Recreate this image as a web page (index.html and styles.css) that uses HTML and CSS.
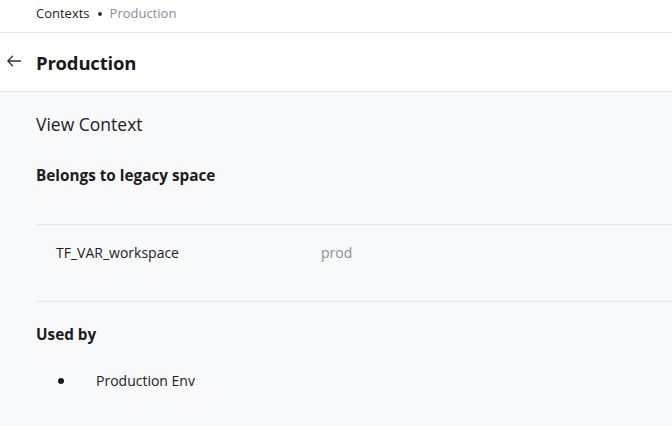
FILE: index.html
```html
<!DOCTYPE html>
<html>
<head>
<meta charset="utf-8">
<link rel="stylesheet" href="styles.css">
</head>
<body>
<div class="topbar">
  <span class="crumb">Contexts</span>
  <span class="dot"></span>
  <span class="crumb current">Production</span>
</div>
<div class="header">
  <svg class="back" width="16" height="12" viewBox="0 0 16 12"><path d="M14.5 6H1.8M6.5 1.3L1.8 6l4.7 4.7" fill="none" stroke="#333" stroke-width="1.3" stroke-linecap="round" stroke-linejoin="round"/></svg>
  <h1 class="title">Production</h1>
</div>
<div class="main">
  <h2 class="view">View Context</h2>
  <h3 class="section">Belongs to legacy space</h3>
  <div class="vars">
    <div class="row">
      <span class="key">TF_VAR_workspace</span>
      <span class="val">prod</span>
    </div>
  </div>
  <h3 class="section used">Used by</h3>
  <ul class="list">
    <li>Production Env</li>
  </ul>
</div>
</body>
</html>
```
FILE: styles.css
```css
html, body { margin: 0; padding: 0; }
body {
  font-family: "Open Sans", "Noto Sans", sans-serif;
  color: #1c1c1e;
  background: #f8f9fb;
  width: 672px;
  height: 426px;
  overflow: hidden;
}
.topbar {
  height: 33px;
  box-sizing: border-box;
  background: #fff;
  border-bottom: 1px solid #e4e6ea;
  display: flex;
  align-items: flex-start;
  padding: 4px 0 0 36px;
  font-size: 13px;
  line-height: 18px;
}
.crumb { color: #222; }
.crumb.current { color: #8a8d93; }
.dot {
  width: 4px;
  height: 4px;
  border-radius: 50%;
  background: #333;
  margin: 8px 8px 0 8px;
}
.header {
  height: 59px;
  box-sizing: border-box;
  background: #fff;
  border-bottom: 1px solid #e4e6ea;
  display: flex;
  align-items: center;
  position: relative;
}
.back { position: absolute; left: 6px; top: 22px; }
.title {
  margin: 0 0 0 36px;
  font-size: 18.5px;
  font-weight: 700;
  color: #1a1a1a;
  letter-spacing: -0.2px;
}
.main { padding: 0 0 0 36px; }
.view {
  margin: 0;
  padding-top: 21px;
  font-size: 17.5px;
  font-weight: 400;
  line-height: 22px;
  color: #1c1c1e;
}
.section {
  margin: 30px 0 0 0;
  font-size: 15.3px;
  font-weight: 700;
  line-height: 20px;
}
.vars {
  margin-top: 39px;
  border-top: 1px solid #e4e6ea;
  border-bottom: 1px solid #e4e6ea;
  height: 76px;
  box-sizing: content-box;
}
.row { display: flex; padding: 19px 0 0 20px; font-size: 14px; line-height: 18px; }
.key { width: 265px; color: #222; }
.val { color: #8a8d93; }
.section.used { margin-top: 22px; }
.list {
  list-style: none;
  margin: 28px 0 0 0;
  padding-left: 20px;
  font-size: 14px;
  line-height: 18px;
  color: #222;
}
.list li { display: flex; align-items: center; }
.list li::before {
  content: "";
  width: 6px;
  height: 6px;
  border-radius: 50%;
  background: #1a1a1a;
  margin: 0 32px 0 2px;
}
```
